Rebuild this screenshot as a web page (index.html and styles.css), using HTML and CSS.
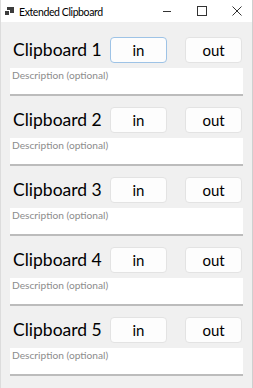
FILE: index.html
```html
<!DOCTYPE html>
<html lang="en">
<head>
    <meta charset="UTF-8">
    <meta name="viewport" content="width=device-width, initial-scale=1.0">
    <title>Extended Clipboard</title>
    <link rel="stylesheet" href="styles.css">
</head>
<body>
    <div class="window">
        <div class="titlebar">
            <svg class="app-icon" width="10" height="9" viewBox="0 0 10 9">
                <rect x="3" y="0" width="7" height="6" fill="#3c3c3c"/>
                <rect x="0.5" y="3.5" width="5" height="5" fill="#3c3c3c" stroke="#ffffff" stroke-width="1"/>
            </svg>
            <span class="title">Extended Clipboard</span>
            <div class="controls">
                <svg class="ctl" width="10" height="10" viewBox="0 0 10 10">
                    <line x1="1" y1="5.5" x2="9" y2="5.5" stroke="#333" stroke-width="1"/>
                </svg>
                <svg class="ctl" width="10" height="10" viewBox="0 0 10 10">
                    <rect x="0.5" y="0.5" width="9" height="9" fill="none" stroke="#333" stroke-width="1"/>
                </svg>
                <svg class="ctl" width="10" height="10" viewBox="0 0 10 10">
                    <path d="M0.5 0.5 L9.5 9.5 M9.5 0.5 L0.5 9.5" stroke="#333" stroke-width="1"/>
                </svg>
            </div>
        </div>
        <div class="content">
            <div class="slot">
                <div class="slot-head">
                    <span class="slot-name">Clipboard 1</span>
                    <button class="btn focused">in</button>
                    <button class="btn btn-out">out</button>
                </div>
                <input class="desc" type="text" placeholder="Description (optional)">
            </div>
            <div class="slot">
                <div class="slot-head">
                    <span class="slot-name">Clipboard 2</span>
                    <button class="btn">in</button>
                    <button class="btn btn-out">out</button>
                </div>
                <input class="desc" type="text" placeholder="Description (optional)">
            </div>
            <div class="slot">
                <div class="slot-head">
                    <span class="slot-name">Clipboard 3</span>
                    <button class="btn">in</button>
                    <button class="btn btn-out">out</button>
                </div>
                <input class="desc" type="text" placeholder="Description (optional)">
            </div>
            <div class="slot">
                <div class="slot-head">
                    <span class="slot-name">Clipboard 4</span>
                    <button class="btn">in</button>
                    <button class="btn btn-out">out</button>
                </div>
                <input class="desc" type="text" placeholder="Description (optional)">
            </div>
            <div class="slot">
                <div class="slot-head">
                    <span class="slot-name">Clipboard 5</span>
                    <button class="btn">in</button>
                    <button class="btn btn-out">out</button>
                </div>
                <input class="desc" type="text" placeholder="Description (optional)">
            </div>
        </div>
    </div>
</body>
</html>
```

FILE: styles.css
```css
html, body {
    margin: 0;
    padding: 0;
}
body {
    width: 253px;
    height: 388px;
    font-family: 'Lato', sans-serif;
    background-color: #f0f0f0;
    overflow: hidden;
}
.window {
    height: 388px;
    box-sizing: border-box;
    border-left: 1px solid #dcdcdc;
    border-right: 1px solid #cfcfcf;
    background-color: #f0f0f0;
}
.titlebar {
    height: 22px;
    background-color: #ffffff;
    display: flex;
    align-items: center;
}
.app-icon {
    margin-left: 3px;
    margin-top: 1px;
}
.title {
    margin-left: 5px;
    font-size: 10.5px;
    letter-spacing: -0.4px;
    color: #000;
    margin-top: 1px;
}
.controls {
    margin-left: auto;
    display: flex;
    gap: 25px;
    margin-right: 10px;
}
.content {
    padding: 15px 9px 0 9px;
    display: flex;
    flex-direction: column;
    gap: 11px;
}
.slot {
    display: flex;
    flex-direction: column;
    gap: 5px;
}
.slot-head {
    display: flex;
    height: 26px;
}
.slot-name {
    width: 100px;
    box-sizing: border-box;
    font-size: 17.5px;
    color: #000;
    padding-left: 3px;
    line-height: 26px;
    white-space: nowrap;
}
.btn {
    width: 57px;
    height: 26px;
    background-color: #fdfdfd;
    border: 1px solid #e3e3e3;
    border-radius: 4px;
    font-family: 'Lato', sans-serif;
    font-size: 15px;
    color: #000;
    padding: 0;
}
.btn-out {
    margin-left: 18px;
}
.btn.focused {
    border-color: #9ec3e6;
}
.desc {
    width: 233px;
    height: 28px;
    box-sizing: border-box;
    border: none;
    border-bottom: 2px solid #bcbcbc;
    background-color: #ffffff;
    padding: 0 2px 12px 2px;
    font-family: 'Lato', sans-serif;
    font-size: 10.2px;
}
.desc::placeholder {
    color: #8c8c8c;
}
```
